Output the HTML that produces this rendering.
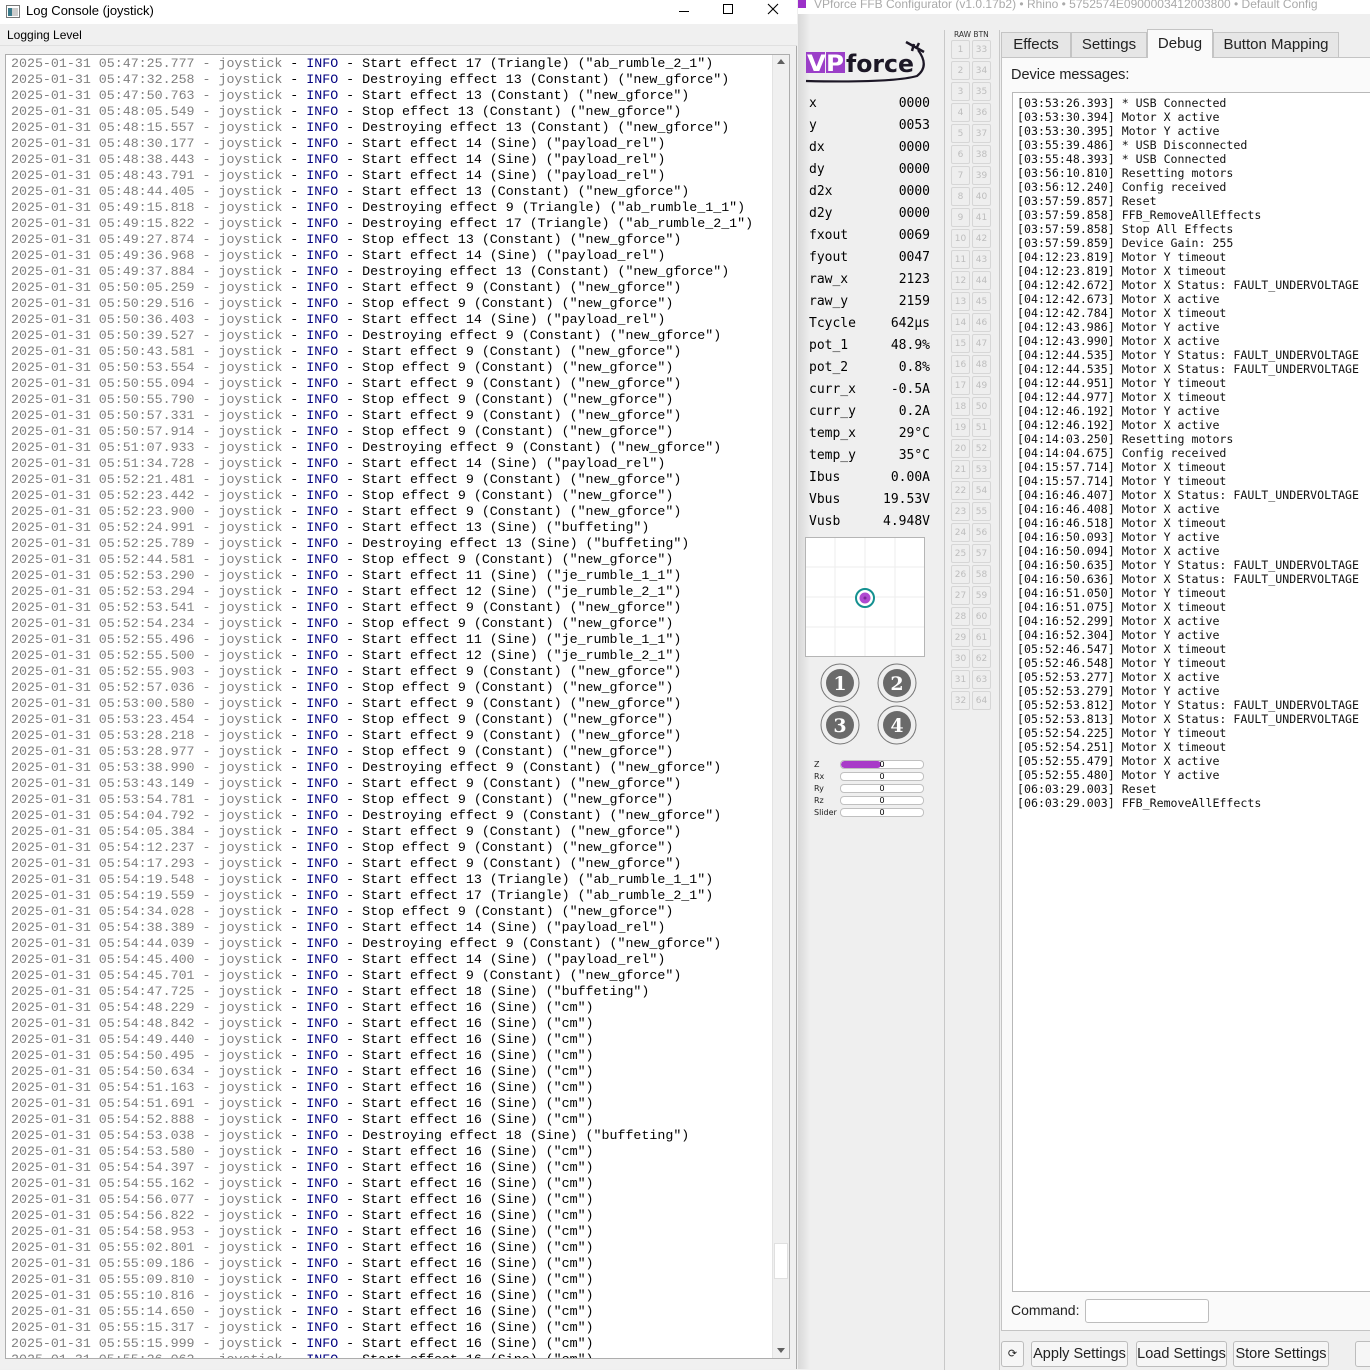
<!DOCTYPE html>
<html><head><meta charset="utf-8">
<style>
*{margin:0;padding:0;box-sizing:border-box}
body{width:1370px;height:1369px;overflow:hidden;background:#efefef;font-family:"Liberation Sans",sans-serif;position:relative}
.abs{position:absolute}
#logwin{left:0;top:0;width:797px;height:1369px;background:#f0f0f0;border-right:1px solid #aaa}
#title{left:0;top:0;width:797px;height:24px;background:#fff}
#title span{position:absolute;left:26px;top:3px;font-size:13px;color:#000}
#menu{left:0;top:24px;width:797px;height:21px;background:#f0f0f0;font-size:12px}
#logbox{left:5px;top:54px;width:785px;height:1305px;background:#fff;border:1px solid #adadad;overflow:hidden}
#log{position:absolute;left:5px;top:1px;font-family:"Liberation Mono",monospace;font-size:13.3px;line-height:16px;white-space:pre;color:#000}
#log i{font-style:normal;color:#808080}
#log b{font-weight:normal;color:#000080}
#sb{right:0;top:0;width:17px;height:1303px;background:#f0f0f0;border-left:1px solid #e3e3e3}
.mono{font-family:"DejaVu Sans Mono","Liberation Mono",monospace}
#vars div{position:absolute;left:809px;width:121px;font-size:13px;height:18px}
#vars span{position:absolute;right:0}
.rb{position:absolute;width:19px;height:19px;border:1px solid #d6d6d6;border-radius:2px;background:#eee;font-size:9px;color:#bdbdbd;text-align:center;line-height:18px;font-family:"DejaVu Sans",sans-serif}
.tab{position:absolute;top:32px;height:25px;background:#e6e6e6;border:1px solid #c4c4c4;border-bottom:none;font-size:15px;font-family:"Liberation Sans",sans-serif;text-align:center;line-height:24px;color:#222;white-space:nowrap}
#dev{left:1012px;top:92px;width:370px;height:1200px;background:#fff;border:1px solid #b8b8b8}
#devtxt{position:absolute;left:4px;top:3px;font-size:11.6px;line-height:14px;white-space:pre;color:#111}
.btn{position:absolute;top:1341px;height:26px;border:1px solid #bdbdbd;border-radius:3px;background:#f6f6f6;font-family:"Liberation Sans",sans-serif;font-size:14.5px;line-height:24px;text-align:center;color:#222;white-space:nowrap;overflow:hidden}
.ax{position:absolute;left:814px;font-size:8px;font-family:"DejaVu Sans",sans-serif;color:#222}
.bar{position:absolute;left:840px;width:84px;height:9px;border:1px solid #c0c0c0;border-radius:4px;background:#fff;font-size:8px;line-height:7px;text-align:center;font-family:"DejaVu Sans",sans-serif;overflow:hidden}
</style></head><body>

<div id="logwin" class="abs">
 <div id="title" class="abs">
  <svg class="abs" style="left:6px;top:5px" width="14" height="13"><rect x="0.5" y="0.5" width="13" height="12" fill="#fff" stroke="#777"/><rect x="2" y="3" width="4" height="8" fill="#3a7a8a"/><rect x="6" y="3" width="6" height="8" fill="#ccc"/></svg>
  <span>Log Console (joystick)</span>
  <div class="abs" style="left:679px;top:11px;width:10px;height:1px;background:#000"></div>
  <div class="abs" style="left:723px;top:4px;width:10px;height:10px;border:1px solid #000"></div>
  <svg class="abs" style="left:767px;top:3px" width="12" height="12"><path d="M1 1L11 11M11 1L1 11" stroke="#000" stroke-width="1.1"/></svg>
 </div>
 <div id="menu" class="abs"><span style="position:absolute;left:7px;top:4px">Logging Level</span></div>
 <div class="abs" style="left:0;top:45px;width:797px;height:1px;background:#e0e0e0"></div>
 <div id="logbox" class="abs">
<div id="log"><i>2025-01-31 05:47:25.777 - joystick</i> - <b>INFO</b> - Start effect 17 (Triangle) ("ab_rumble_2_1")
<i>2025-01-31 05:47:32.258 - joystick</i> - <b>INFO</b> - Destroying effect 13 (Constant) ("new_gforce")
<i>2025-01-31 05:47:50.763 - joystick</i> - <b>INFO</b> - Start effect 13 (Constant) ("new_gforce")
<i>2025-01-31 05:48:05.549 - joystick</i> - <b>INFO</b> - Stop effect 13 (Constant) ("new_gforce")
<i>2025-01-31 05:48:15.557 - joystick</i> - <b>INFO</b> - Destroying effect 13 (Constant) ("new_gforce")
<i>2025-01-31 05:48:30.177 - joystick</i> - <b>INFO</b> - Start effect 14 (Sine) ("payload_rel")
<i>2025-01-31 05:48:38.443 - joystick</i> - <b>INFO</b> - Start effect 14 (Sine) ("payload_rel")
<i>2025-01-31 05:48:43.791 - joystick</i> - <b>INFO</b> - Start effect 14 (Sine) ("payload_rel")
<i>2025-01-31 05:48:44.405 - joystick</i> - <b>INFO</b> - Start effect 13 (Constant) ("new_gforce")
<i>2025-01-31 05:49:15.818 - joystick</i> - <b>INFO</b> - Destroying effect 9 (Triangle) ("ab_rumble_1_1")
<i>2025-01-31 05:49:15.822 - joystick</i> - <b>INFO</b> - Destroying effect 17 (Triangle) ("ab_rumble_2_1")
<i>2025-01-31 05:49:27.874 - joystick</i> - <b>INFO</b> - Stop effect 13 (Constant) ("new_gforce")
<i>2025-01-31 05:49:36.968 - joystick</i> - <b>INFO</b> - Start effect 14 (Sine) ("payload_rel")
<i>2025-01-31 05:49:37.884 - joystick</i> - <b>INFO</b> - Destroying effect 13 (Constant) ("new_gforce")
<i>2025-01-31 05:50:05.259 - joystick</i> - <b>INFO</b> - Start effect 9 (Constant) ("new_gforce")
<i>2025-01-31 05:50:29.516 - joystick</i> - <b>INFO</b> - Stop effect 9 (Constant) ("new_gforce")
<i>2025-01-31 05:50:36.403 - joystick</i> - <b>INFO</b> - Start effect 14 (Sine) ("payload_rel")
<i>2025-01-31 05:50:39.527 - joystick</i> - <b>INFO</b> - Destroying effect 9 (Constant) ("new_gforce")
<i>2025-01-31 05:50:43.581 - joystick</i> - <b>INFO</b> - Start effect 9 (Constant) ("new_gforce")
<i>2025-01-31 05:50:53.554 - joystick</i> - <b>INFO</b> - Stop effect 9 (Constant) ("new_gforce")
<i>2025-01-31 05:50:55.094 - joystick</i> - <b>INFO</b> - Start effect 9 (Constant) ("new_gforce")
<i>2025-01-31 05:50:55.790 - joystick</i> - <b>INFO</b> - Stop effect 9 (Constant) ("new_gforce")
<i>2025-01-31 05:50:57.331 - joystick</i> - <b>INFO</b> - Start effect 9 (Constant) ("new_gforce")
<i>2025-01-31 05:50:57.914 - joystick</i> - <b>INFO</b> - Stop effect 9 (Constant) ("new_gforce")
<i>2025-01-31 05:51:07.933 - joystick</i> - <b>INFO</b> - Destroying effect 9 (Constant) ("new_gforce")
<i>2025-01-31 05:51:34.728 - joystick</i> - <b>INFO</b> - Start effect 14 (Sine) ("payload_rel")
<i>2025-01-31 05:52:21.481 - joystick</i> - <b>INFO</b> - Start effect 9 (Constant) ("new_gforce")
<i>2025-01-31 05:52:23.442 - joystick</i> - <b>INFO</b> - Stop effect 9 (Constant) ("new_gforce")
<i>2025-01-31 05:52:23.900 - joystick</i> - <b>INFO</b> - Start effect 9 (Constant) ("new_gforce")
<i>2025-01-31 05:52:24.991 - joystick</i> - <b>INFO</b> - Start effect 13 (Sine) ("buffeting")
<i>2025-01-31 05:52:25.789 - joystick</i> - <b>INFO</b> - Destroying effect 13 (Sine) ("buffeting")
<i>2025-01-31 05:52:44.581 - joystick</i> - <b>INFO</b> - Stop effect 9 (Constant) ("new_gforce")
<i>2025-01-31 05:52:53.290 - joystick</i> - <b>INFO</b> - Start effect 11 (Sine) ("je_rumble_1_1")
<i>2025-01-31 05:52:53.294 - joystick</i> - <b>INFO</b> - Start effect 12 (Sine) ("je_rumble_2_1")
<i>2025-01-31 05:52:53.541 - joystick</i> - <b>INFO</b> - Start effect 9 (Constant) ("new_gforce")
<i>2025-01-31 05:52:54.234 - joystick</i> - <b>INFO</b> - Stop effect 9 (Constant) ("new_gforce")
<i>2025-01-31 05:52:55.496 - joystick</i> - <b>INFO</b> - Start effect 11 (Sine) ("je_rumble_1_1")
<i>2025-01-31 05:52:55.500 - joystick</i> - <b>INFO</b> - Start effect 12 (Sine) ("je_rumble_2_1")
<i>2025-01-31 05:52:55.903 - joystick</i> - <b>INFO</b> - Start effect 9 (Constant) ("new_gforce")
<i>2025-01-31 05:52:57.036 - joystick</i> - <b>INFO</b> - Stop effect 9 (Constant) ("new_gforce")
<i>2025-01-31 05:53:00.580 - joystick</i> - <b>INFO</b> - Start effect 9 (Constant) ("new_gforce")
<i>2025-01-31 05:53:23.454 - joystick</i> - <b>INFO</b> - Stop effect 9 (Constant) ("new_gforce")
<i>2025-01-31 05:53:28.218 - joystick</i> - <b>INFO</b> - Start effect 9 (Constant) ("new_gforce")
<i>2025-01-31 05:53:28.977 - joystick</i> - <b>INFO</b> - Stop effect 9 (Constant) ("new_gforce")
<i>2025-01-31 05:53:38.990 - joystick</i> - <b>INFO</b> - Destroying effect 9 (Constant) ("new_gforce")
<i>2025-01-31 05:53:43.149 - joystick</i> - <b>INFO</b> - Start effect 9 (Constant) ("new_gforce")
<i>2025-01-31 05:53:54.781 - joystick</i> - <b>INFO</b> - Stop effect 9 (Constant) ("new_gforce")
<i>2025-01-31 05:54:04.792 - joystick</i> - <b>INFO</b> - Destroying effect 9 (Constant) ("new_gforce")
<i>2025-01-31 05:54:05.384 - joystick</i> - <b>INFO</b> - Start effect 9 (Constant) ("new_gforce")
<i>2025-01-31 05:54:12.237 - joystick</i> - <b>INFO</b> - Stop effect 9 (Constant) ("new_gforce")
<i>2025-01-31 05:54:17.293 - joystick</i> - <b>INFO</b> - Start effect 9 (Constant) ("new_gforce")
<i>2025-01-31 05:54:19.548 - joystick</i> - <b>INFO</b> - Start effect 13 (Triangle) ("ab_rumble_1_1")
<i>2025-01-31 05:54:19.559 - joystick</i> - <b>INFO</b> - Start effect 17 (Triangle) ("ab_rumble_2_1")
<i>2025-01-31 05:54:34.028 - joystick</i> - <b>INFO</b> - Stop effect 9 (Constant) ("new_gforce")
<i>2025-01-31 05:54:38.389 - joystick</i> - <b>INFO</b> - Start effect 14 (Sine) ("payload_rel")
<i>2025-01-31 05:54:44.039 - joystick</i> - <b>INFO</b> - Destroying effect 9 (Constant) ("new_gforce")
<i>2025-01-31 05:54:45.400 - joystick</i> - <b>INFO</b> - Start effect 14 (Sine) ("payload_rel")
<i>2025-01-31 05:54:45.701 - joystick</i> - <b>INFO</b> - Start effect 9 (Constant) ("new_gforce")
<i>2025-01-31 05:54:47.725 - joystick</i> - <b>INFO</b> - Start effect 18 (Sine) ("buffeting")
<i>2025-01-31 05:54:48.229 - joystick</i> - <b>INFO</b> - Start effect 16 (Sine) ("cm")
<i>2025-01-31 05:54:48.842 - joystick</i> - <b>INFO</b> - Start effect 16 (Sine) ("cm")
<i>2025-01-31 05:54:49.440 - joystick</i> - <b>INFO</b> - Start effect 16 (Sine) ("cm")
<i>2025-01-31 05:54:50.495 - joystick</i> - <b>INFO</b> - Start effect 16 (Sine) ("cm")
<i>2025-01-31 05:54:50.634 - joystick</i> - <b>INFO</b> - Start effect 16 (Sine) ("cm")
<i>2025-01-31 05:54:51.163 - joystick</i> - <b>INFO</b> - Start effect 16 (Sine) ("cm")
<i>2025-01-31 05:54:51.691 - joystick</i> - <b>INFO</b> - Start effect 16 (Sine) ("cm")
<i>2025-01-31 05:54:52.888 - joystick</i> - <b>INFO</b> - Start effect 16 (Sine) ("cm")
<i>2025-01-31 05:54:53.038 - joystick</i> - <b>INFO</b> - Destroying effect 18 (Sine) ("buffeting")
<i>2025-01-31 05:54:53.580 - joystick</i> - <b>INFO</b> - Start effect 16 (Sine) ("cm")
<i>2025-01-31 05:54:54.397 - joystick</i> - <b>INFO</b> - Start effect 16 (Sine) ("cm")
<i>2025-01-31 05:54:55.162 - joystick</i> - <b>INFO</b> - Start effect 16 (Sine) ("cm")
<i>2025-01-31 05:54:56.077 - joystick</i> - <b>INFO</b> - Start effect 16 (Sine) ("cm")
<i>2025-01-31 05:54:56.822 - joystick</i> - <b>INFO</b> - Start effect 16 (Sine) ("cm")
<i>2025-01-31 05:54:58.953 - joystick</i> - <b>INFO</b> - Start effect 16 (Sine) ("cm")
<i>2025-01-31 05:55:02.801 - joystick</i> - <b>INFO</b> - Start effect 16 (Sine) ("cm")
<i>2025-01-31 05:55:09.186 - joystick</i> - <b>INFO</b> - Start effect 16 (Sine) ("cm")
<i>2025-01-31 05:55:09.810 - joystick</i> - <b>INFO</b> - Start effect 16 (Sine) ("cm")
<i>2025-01-31 05:55:10.816 - joystick</i> - <b>INFO</b> - Start effect 16 (Sine) ("cm")
<i>2025-01-31 05:55:14.650 - joystick</i> - <b>INFO</b> - Start effect 16 (Sine) ("cm")
<i>2025-01-31 05:55:15.317 - joystick</i> - <b>INFO</b> - Start effect 16 (Sine) ("cm")
<i>2025-01-31 05:55:15.999 - joystick</i> - <b>INFO</b> - Start effect 16 (Sine) ("cm")
<i>2025-01-31 05:55:26.062 - joystick</i> - <b>INFO</b> - Start effect 16 (Sine) ("cm")</div>
  <div id="sb" class="abs">
   <svg class="abs" style="left:4px;top:4px" width="8" height="6"><path d="M0 5L4 0L8 5Z" fill="#606060"/></svg>
   <div class="abs" style="left:1px;top:1188px;width:14px;height:36px;background:#fff;border:1px solid #e0e0e0"></div>
   <svg class="abs" style="left:4px;top:1293px" width="8" height="6"><path d="M0 0L4 5L8 0Z" fill="#606060"/></svg>
  </div>
 </div>
</div>

<!-- configurator -->
<div class="abs" style="left:798px;top:0;width:572px;height:14px;background:#fff"></div>
<div class="abs" style="left:798px;top:0;width:8px;height:8px;background:#9b30c8"></div>
<div class="abs" style="left:814px;top:-3px;font-size:12px;color:#aaa;font-family:'Liberation Sans',sans-serif;white-space:nowrap">VPforce FFB Configurator (v1.0.17b2) • Rhino • 5752574E0900003412003800 • Default Config</div>
<div class="abs" style="left:798px;top:14px;width:572px;height:1355px;background:#efefef"></div>
<div class="abs" style="left:798px;top:14px;width:12px;height:1355px;background:linear-gradient(90deg,#d8d8d8,#efefef)"></div>

<!-- left panel -->
<div class="abs" style="left:800px;top:30px;width:145px;height:1340px;border-right:1px solid #c8c8c8"></div>
<svg class="abs" style="left:802px;top:38px" width="130" height="50">
 <rect x="4" y="14" width="19" height="21" fill="#9b3fc8"/><rect x="24" y="14" width="19" height="21" fill="#9b3fc8"/>
 <text x="5" y="33" font-family="DejaVu Sans" font-weight="bold" font-size="22" fill="#fff" textLength="37" lengthAdjust="spacingAndGlyphs">VP</text>
 <text x="44" y="34" font-family="DejaVu Sans" font-weight="bold" font-size="24" fill="#1c1726" textLength="68" lengthAdjust="spacingAndGlyphs">force</text>
 <path d="M4 43 Q90 45 115 38 Q128 28 116 12" stroke="#1c1726" stroke-width="2.2" fill="none"/>
 <path d="M104 4 L122 14 M112 6 L110 13 M117 5 L114 11" stroke="#1c1726" stroke-width="2.5" fill="none"/>
</svg>
<div id="vars" class="mono">
 <div style="top:96px">x<span>0000</span></div>
 <div style="top:118px">y<span>0053</span></div>
 <div style="top:140px">dx<span>0000</span></div>
 <div style="top:162px">dy<span>0000</span></div>
 <div style="top:184px">d2x<span>0000</span></div>
 <div style="top:206px">d2y<span>0000</span></div>
 <div style="top:228px">fxout<span>0069</span></div>
 <div style="top:250px">fyout<span>0047</span></div>
 <div style="top:272px">raw_x<span>2123</span></div>
 <div style="top:294px">raw_y<span>2159</span></div>
 <div style="top:316px">Tcycle<span>642µs</span></div>
 <div style="top:338px">pot_1<span>48.9%</span></div>
 <div style="top:360px">pot_2<span>0.8%</span></div>
 <div style="top:382px">curr_x<span>-0.5A</span></div>
 <div style="top:404px">curr_y<span>0.2A</span></div>
 <div style="top:426px">temp_x<span>29°C</span></div>
 <div style="top:448px">temp_y<span>35°C</span></div>
 <div style="top:470px">Ibus<span>0.00A</span></div>
 <div style="top:492px">Vbus<span>19.53V</span></div>
 <div style="top:514px">Vusb<span>4.948V</span></div>
</div>
<svg class="abs" style="left:805px;top:537px" width="121" height="121">
 <rect x="0.5" y="0.5" width="119" height="119" fill="#fff" stroke="#b5b5b5"/>
 <path d="M30 1V119M60 1V119M90 1V119M1 30H119M1 60H119M1 90H119" stroke="#eee"/>
 <circle cx="60" cy="61" r="9" fill="#fff" stroke="#149090" stroke-width="2"/>
 <circle cx="60" cy="61" r="5.5" fill="#b04ad0"/><circle cx="60" cy="61" r="1.5" fill="#7a2898"/>
</svg>
<svg class="abs" style="left:815px;top:660px" width="110" height="90" font-family="DejaVu Serif" font-weight="bold" font-size="19" fill="#fff" text-anchor="middle">
 <g fill="none" stroke="#777"><circle cx="25" cy="23" r="19"/><circle cx="82" cy="23" r="19"/><circle cx="25" cy="65" r="19"/><circle cx="82" cy="65" r="19"/></g>
 <g fill="#6a6a6a"><circle cx="25" cy="23" r="14"/><circle cx="82" cy="23" r="14"/><circle cx="25" cy="65" r="14"/><circle cx="82" cy="65" r="14"/></g>
 <text x="25" y="30">1</text><text x="82" y="30">2</text><text x="25" y="72">3</text><text x="82" y="72">4</text>
</svg>
<div class="ax" style="top:760px">Z</div><div class="bar" style="top:760px"><div style="position:absolute;left:0;top:0;width:40px;height:7px;background:#a83ac8;border-radius:4px"></div><span style="position:relative">0</span></div>
<div class="ax" style="top:772px">Rx</div><div class="bar" style="top:772px">0</div>
<div class="ax" style="top:784px">Ry</div><div class="bar" style="top:784px">0</div>
<div class="ax" style="top:796px">Rz</div><div class="bar" style="top:796px">0</div>
<div class="ax" style="top:808px">Slider</div><div class="bar" style="top:808px">0</div>

<!-- raw btn column -->
<div class="abs" style="left:946px;top:30px;width:54px;height:1340px;border-right:1px solid #c8c8c8"></div>
<div class="abs" style="left:954px;top:30px;font-size:7.5px;font-family:'DejaVu Sans',sans-serif;color:#333">RAW BTN</div>
<div id="rbs">
<div class="rb" style="left:951px;top:40px">1</div><div class="rb" style="left:972px;top:40px">33</div>
<div class="rb" style="left:951px;top:61px">2</div><div class="rb" style="left:972px;top:61px">34</div>
<div class="rb" style="left:951px;top:82px">3</div><div class="rb" style="left:972px;top:82px">35</div>
<div class="rb" style="left:951px;top:103px">4</div><div class="rb" style="left:972px;top:103px">36</div>
<div class="rb" style="left:951px;top:124px">5</div><div class="rb" style="left:972px;top:124px">37</div>
<div class="rb" style="left:951px;top:145px">6</div><div class="rb" style="left:972px;top:145px">38</div>
<div class="rb" style="left:951px;top:166px">7</div><div class="rb" style="left:972px;top:166px">39</div>
<div class="rb" style="left:951px;top:187px">8</div><div class="rb" style="left:972px;top:187px">40</div>
<div class="rb" style="left:951px;top:208px">9</div><div class="rb" style="left:972px;top:208px">41</div>
<div class="rb" style="left:951px;top:229px">10</div><div class="rb" style="left:972px;top:229px">42</div>
<div class="rb" style="left:951px;top:250px">11</div><div class="rb" style="left:972px;top:250px">43</div>
<div class="rb" style="left:951px;top:271px">12</div><div class="rb" style="left:972px;top:271px">44</div>
<div class="rb" style="left:951px;top:292px">13</div><div class="rb" style="left:972px;top:292px">45</div>
<div class="rb" style="left:951px;top:313px">14</div><div class="rb" style="left:972px;top:313px">46</div>
<div class="rb" style="left:951px;top:334px">15</div><div class="rb" style="left:972px;top:334px">47</div>
<div class="rb" style="left:951px;top:355px">16</div><div class="rb" style="left:972px;top:355px">48</div>
<div class="rb" style="left:951px;top:376px">17</div><div class="rb" style="left:972px;top:376px">49</div>
<div class="rb" style="left:951px;top:397px">18</div><div class="rb" style="left:972px;top:397px">50</div>
<div class="rb" style="left:951px;top:418px">19</div><div class="rb" style="left:972px;top:418px">51</div>
<div class="rb" style="left:951px;top:439px">20</div><div class="rb" style="left:972px;top:439px">52</div>
<div class="rb" style="left:951px;top:460px">21</div><div class="rb" style="left:972px;top:460px">53</div>
<div class="rb" style="left:951px;top:481px">22</div><div class="rb" style="left:972px;top:481px">54</div>
<div class="rb" style="left:951px;top:502px">23</div><div class="rb" style="left:972px;top:502px">55</div>
<div class="rb" style="left:951px;top:523px">24</div><div class="rb" style="left:972px;top:523px">56</div>
<div class="rb" style="left:951px;top:544px">25</div><div class="rb" style="left:972px;top:544px">57</div>
<div class="rb" style="left:951px;top:565px">26</div><div class="rb" style="left:972px;top:565px">58</div>
<div class="rb" style="left:951px;top:586px">27</div><div class="rb" style="left:972px;top:586px">59</div>
<div class="rb" style="left:951px;top:607px">28</div><div class="rb" style="left:972px;top:607px">60</div>
<div class="rb" style="left:951px;top:628px">29</div><div class="rb" style="left:972px;top:628px">61</div>
<div class="rb" style="left:951px;top:649px">30</div><div class="rb" style="left:972px;top:649px">62</div>
<div class="rb" style="left:951px;top:670px">31</div><div class="rb" style="left:972px;top:670px">63</div>
<div class="rb" style="left:951px;top:691px">32</div><div class="rb" style="left:972px;top:691px">64</div>
</div>

<!-- tabs -->
<div class="abs" style="left:1001px;top:57px;width:370px;height:1274px;background:#fafafa;border:1px solid #c4c4c4"></div>
<div class="tab" style="left:1001px;width:70px">Effects</div>
<div class="tab" style="left:1071px;width:76px">Settings</div>
<div class="tab" style="left:1147px;top:29px;height:29px;width:66px;background:#fafafa;line-height:28px">Debug</div>
<div class="tab" style="left:1213px;width:126px">Button Mapping</div>
<div class="abs" style="left:1011px;top:67px;font-size:14.5px;font-family:'Liberation Sans',sans-serif;color:#222">Device messages:</div>
<div id="dev" class="abs"><div id="devtxt" class="mono">[03:53:26.393] * USB Connected
[03:53:30.394] Motor X active
[03:53:30.395] Motor Y active
[03:55:39.486] * USB Disconnected
[03:55:48.393] * USB Connected
[03:56:10.810] Resetting motors
[03:56:12.240] Config received
[03:57:59.857] Reset
[03:57:59.858] FFB_RemoveAllEffects
[03:57:59.858] Stop All Effects
[03:57:59.859] Device Gain: 255
[04:12:23.819] Motor Y timeout
[04:12:23.819] Motor X timeout
[04:12:42.672] Motor X Status: FAULT_UNDERVOLTAGE
[04:12:42.673] Motor X active
[04:12:42.784] Motor X timeout
[04:12:43.986] Motor Y active
[04:12:43.990] Motor X active
[04:12:44.535] Motor Y Status: FAULT_UNDERVOLTAGE
[04:12:44.535] Motor X Status: FAULT_UNDERVOLTAGE
[04:12:44.951] Motor Y timeout
[04:12:44.977] Motor X timeout
[04:12:46.192] Motor Y active
[04:12:46.192] Motor X active
[04:14:03.250] Resetting motors
[04:14:04.675] Config received
[04:15:57.714] Motor X timeout
[04:15:57.714] Motor Y timeout
[04:16:46.407] Motor X Status: FAULT_UNDERVOLTAGE
[04:16:46.408] Motor X active
[04:16:46.518] Motor X timeout
[04:16:50.093] Motor Y active
[04:16:50.094] Motor X active
[04:16:50.635] Motor Y Status: FAULT_UNDERVOLTAGE
[04:16:50.636] Motor X Status: FAULT_UNDERVOLTAGE
[04:16:51.050] Motor Y timeout
[04:16:51.075] Motor X timeout
[04:16:52.299] Motor X active
[04:16:52.304] Motor Y active
[05:52:46.547] Motor X timeout
[05:52:46.548] Motor Y timeout
[05:52:53.277] Motor X active
[05:52:53.279] Motor Y active
[05:52:53.812] Motor Y Status: FAULT_UNDERVOLTAGE
[05:52:53.813] Motor X Status: FAULT_UNDERVOLTAGE
[05:52:54.225] Motor Y timeout
[05:52:54.251] Motor X timeout
[05:52:55.479] Motor X active
[05:52:55.480] Motor Y active
[06:03:29.003] Reset
[06:03:29.003] FFB_RemoveAllEffects</div></div>
<div class="abs" style="left:1011px;top:1302px;font-size:14px;font-family:'Liberation Sans',sans-serif;color:#222">Command:</div>
<div class="abs" style="left:1085px;top:1299px;width:124px;height:24px;background:#fff;border:1px solid #bdbdbd;border-radius:3px"></div>

<div class="btn" style="left:1001px;width:23px;font-size:11px">⟳</div>
<div class="btn" style="left:1031px;width:97px">Apply Settings</div>
<div class="btn" style="left:1136px;width:91px">Load Settings</div>
<div class="btn" style="left:1233px;width:96px">Store Settings</div>
<div class="btn" style="left:1355px;width:30px"></div>
</body></html>
